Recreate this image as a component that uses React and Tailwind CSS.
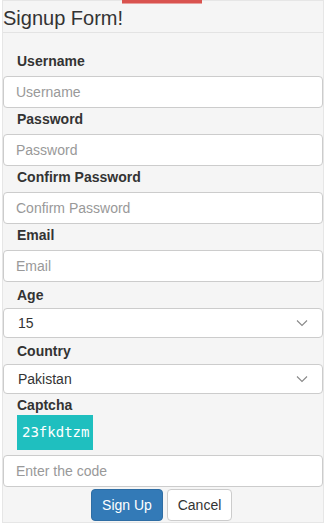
const FONT = { fontFamily: '"Liberation Sans", Arial, sans-serif' }

function Label({ children, h = 'h-[26px]' }) {
  return (
    <div className={`${h} pl-[14px] pt-[1px] text-[14px] leading-[20px] font-bold text-[#333]`}>{children}</div>
  )
}

function TextInput({ placeholder, type = 'text' }) {
  return (
    <input
      type={type}
      placeholder={placeholder}
      className="block w-full h-[32px] bg-white border border-[#ccc] rounded-[4px] px-[12px] text-[14px] text-[#555] placeholder-[#999] focus:outline-none"
    />
  )
}

function Select({ value }) {
  return (
    <div className="flex items-center justify-between h-[30px] bg-white border border-[#ccc] rounded-[4px] pl-[14px] pr-[14px] text-[14px] text-[#333]">
      <span>{value}</span>
      <svg width="12" height="8" viewBox="0 0 12 8" fill="none">
        <path d="M1 1.5l5 5 5-5" stroke="#888" strokeWidth="1.1" />
      </svg>
    </div>
  )
}

export default function App() {
  return (
    <div className="relative w-[326px] h-[526px] bg-white overflow-hidden" style={FONT}>
      {/* red strip at the top */}
      <div className="absolute top-0 left-[122px] w-[80px] h-[4px] bg-[#d9534f] border-b border-[#e8a09e]" />

      <div className="ml-[2px] w-[322px] h-[523px] bg-[#f5f5f5] border border-[#e6e6e6]">
        {/* header */}
        <div className="h-[32px] border-b border-[#e3e3e3] text-[20px] leading-[34px] text-[#333]">
          Signup Form!
        </div>

        <div className="pt-[17px]">
          <Label>Username</Label>
          <TextInput placeholder="Username" />
          <Label>Password</Label>
          <TextInput placeholder="Password" type="password" />
          <Label>Confirm Password</Label>
          <TextInput placeholder="Confirm Password" type="password" />
          <Label>Email</Label>
          <TextInput placeholder="Email" />

          <div className="h-[2px]" />
          <Label h="h-[24px]">Age</Label>
          <Select value="15" />
          <div className="h-[2px]" />
          <Label h="h-[24px]">Country</Label>
          <Select value="Pakistan" />

          <Label h="h-[21px]">Captcha</Label>
          <div className="pl-[14px]">
            <div
              className="w-[76px] h-[35px] bg-[#1fbfbf] text-white text-[14px] leading-[35px] pl-[5px]"
              style={{ fontFamily: '"DejaVu Sans Mono", "Liberation Mono", monospace' }}
            >
              23fkdtzm
            </div>
          </div>

          <div className="mt-[5px]">
            <TextInput placeholder="Enter the code" />
          </div>

          <div className="mt-[2px] flex justify-center gap-[4px] pr-[3px]">
            <button className="h-[32px] w-[72px] rounded-[4px] bg-[#337ab7] border border-[#2e6da4] text-white text-[14px]">
              Sign Up
            </button>
            <button className="h-[32px] w-[65px] rounded-[4px] bg-white border border-[#ccc] text-[#333] text-[14px]">
              Cancel
            </button>
          </div>
        </div>
      </div>
    </div>
  )
}
